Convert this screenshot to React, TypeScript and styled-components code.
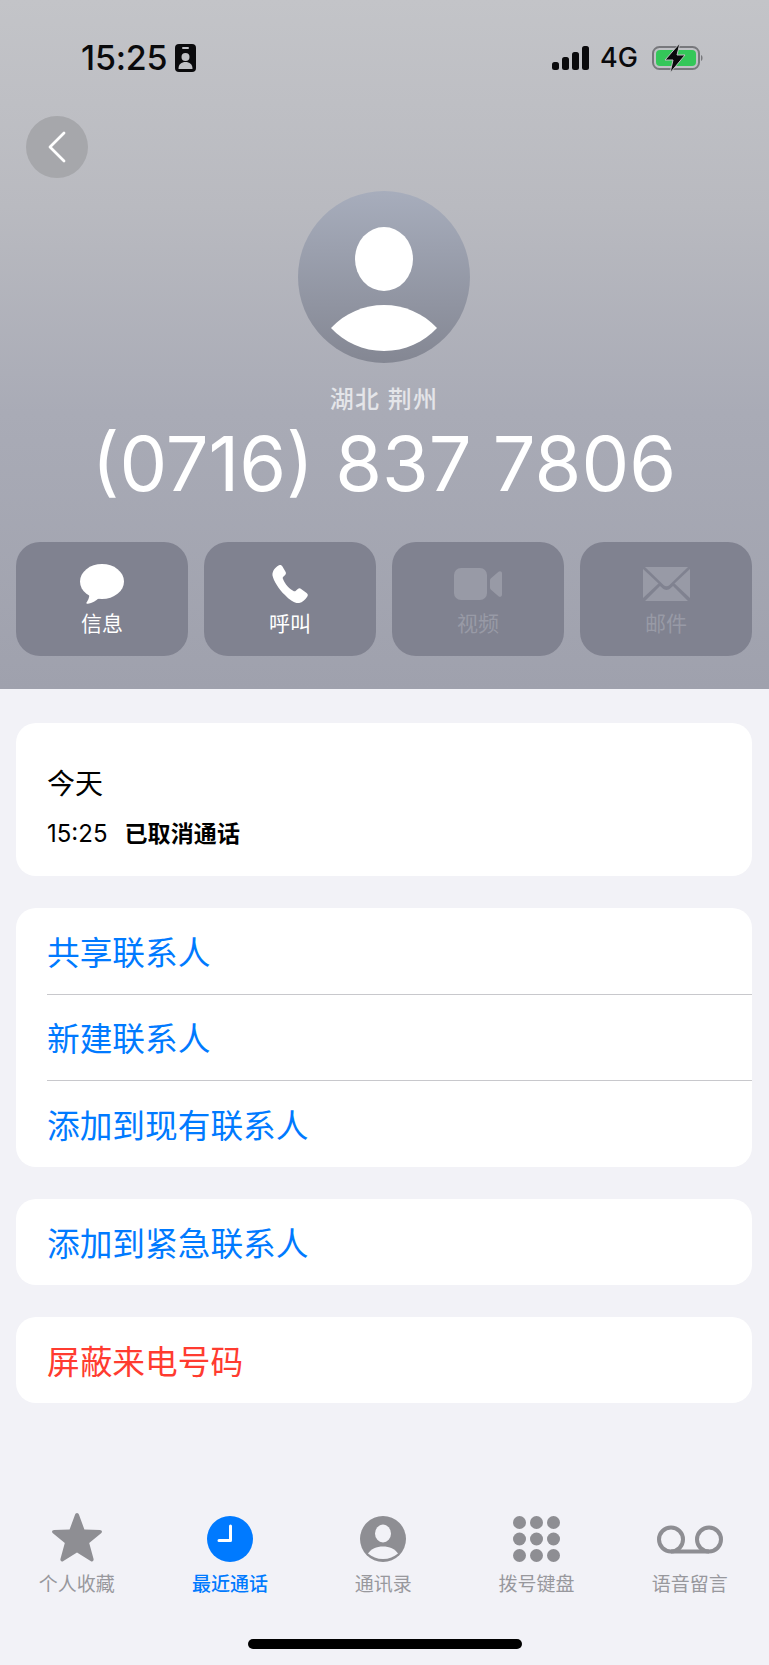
import React from "react";
import styled, { createGlobalStyle } from "styled-components";

const Global = createGlobalStyle`
  html, body { margin: 0; padding: 0; background: #f2f2f7; }
  * { box-sizing: border-box; }
`;
const CJK = `Inter, "Noto Sans CJK SC", sans-serif`;

const Page = styled.div`
  width: 769px; height: 1665px; display: flex; flex-direction: column;
  background: #f2f2f7; font-family: ${CJK}; overflow: hidden;
`;
const Header = styled.header`
  height: 689px; flex: none; padding: 41px 17px 33px 16px;
  background: linear-gradient(180deg, #c3c4c8 0%, #b9bac0 30%, #a9abb6 60%, #9fa1ad 100%);
  display: flex; flex-direction: column;
`;
const StatusBar = styled.div`
  height: 34px; display: flex; align-items: center; justify-content: space-between;
  padding: 0 48px 0 65px;
`;
const StatusGroup = styled.div<{ $gap: number }>`
  display: flex; align-items: center; gap: ${p => p.$gap}px;
`;
const Time = styled.span`
  font-family: Inter, sans-serif; font-size: 34px; font-weight: 500; color: #0a0a0c; letter-spacing: -0.2px; line-height: 34px;
`;
const Net = styled.span`
  font-family: Inter, sans-serif; font-size: 27px; font-weight: 500; color: #0a0a0c; line-height: 30px; margin: 0 2px 0 -2px;
`;
const BackButton = styled.div`
  width: 62px; height: 62px; border-radius: 50%; margin: 41px 0 0 10px; flex: none;
  background: #a6a7ab; display: flex; align-items: center; justify-content: center;
`;
const Avatar = styled.div`
  align-self: center; width: 172px; height: 172px; margin: 13px 0 0 0; flex: none;
`;
const Region = styled.div`
  text-align: center; font-size: 24px; font-weight: 500; line-height: 30px; margin-top: 22px; color: #e4e5e9; letter-spacing: 1.2px;
`;
const Phone = styled.div`
  text-align: center; font-family: Inter, sans-serif; font-weight: 400; font-size: 75.7px; line-height: 94px; color: #fff; margin-top: 2px;
`;
const Actions = styled.div`
  display: grid; grid-template-columns: repeat(4, 1fr); gap: 16px; margin-top: auto;
`;
const Action = styled.div<{ $off?: boolean }>`
  height: 114px; border-radius: 24px; background: #808290;
  display: flex; flex-direction: column; align-items: center;
  color: ${p => (p.$off ? "#989aa6" : "#fff")};
`;
const ActionIcon = styled.div`
  height: 42px; margin-top: 21px; display: flex; align-items: center; justify-content: center;
`;
const ActionLabel = styled.div`
  font-size: 21px; line-height: 26px; margin-top: 6px;
`;
const Body = styled.main`
  padding: 34px 17px 0 16px; display: flex; flex-direction: column; gap: 32px;
`;
const Card = styled.section`
  background: #fff; border-radius: 20px; overflow: hidden;
`;
const TodayCard = styled(Card)`
  height: 153px; padding: 43px 31px 0;
`;
const Today = styled.div`
  font-size: 28px; line-height: 36px; color: #000;
`;
const CallLine = styled.div`
  display: flex; align-items: baseline; gap: 17px; margin-top: 16px; line-height: 32px; color: #000;
`;
const CallTime = styled.span`
  font-family: Inter, sans-serif; font-size: 24px;
`;
const CallState = styled.span`
  font-size: 23px; font-weight: 700; letter-spacing: 0.1px;
`;
const Row = styled.div<{ $danger?: boolean; $line?: boolean; $tall?: boolean }>`
  height: ${p => (p.$tall ? 87 : 86)}px; margin-left: 31px; padding-bottom: 2px; display: flex; align-items: center;
  font-size: 32.7px; color: ${p => (p.$danger ? "#ff3b30" : "#007aff")};
  border-bottom: ${p => (p.$line ? "1px solid #c8c8cc" : "none")};
`;
const TabBar = styled.nav`
  margin-top: auto; height: 261px; padding: 108px 0 0; display: grid; grid-template-columns: repeat(5, 153.3px); position: relative;
`;
const Tab = styled.div<{ $active?: boolean }>`
  display: flex; flex-direction: column; align-items: center;
  color: ${p => (p.$active ? "#007aff" : "#98989d")}; font-weight: ${p => (p.$active ? 500 : 400)};
`;
const TabIcon = styled.div`
  height: 50px; display: flex; align-items: flex-end; justify-content: center;
`;
const TabLabel = styled.div`
  font-size: 19px; line-height: 24px; margin-top: 11px;
`;
const HomeBar = styled.div`
  position: absolute; left: 248px; bottom: 16px; width: 274px; height: 10px; border-radius: 5px; background: #000;
`;

const Signal = () => (
  <svg width="38" height="24" viewBox="0 0 38 24" fill="#0a0a0c">
    <rect x="0" y="16" width="7" height="8" rx="2.5" />
    <rect x="10" y="11" width="7" height="13" rx="2.5" />
    <rect x="20" y="6" width="7" height="18" rx="2.5" />
    <rect x="30" y="0" width="7" height="24" rx="2.5" />
  </svg>
);
const Badge = () => (
  <svg width="21" height="28" viewBox="0 0 21 28">
    <rect width="21" height="28" rx="4" fill="#0a0a0c" />
    <rect x="7" y="3" width="7" height="2" rx="1" fill="#c0c1c5" />
    <circle cx="10.5" cy="13" r="4" fill="#c0c1c5" />
    <path d="M3.5 25c0-5 3-7 7-7s7 2 7 7z" fill="#c0c1c5" />
  </svg>
);
const Battery = () => (
  <svg width="52" height="30" viewBox="0 0 52 30">
    <rect x="1" y="4" width="46" height="22" rx="6.5" fill="none" stroke="#77787c" strokeWidth="2" />
    <rect x="4" y="7" width="40" height="16" rx="4" fill="#34c759" />
    <path d="M49 12c2 .6 2 5.4 0 6z" fill="#77787c" />
    <path d="M28 0 13 17h8l-3 13 15-18h-8z" fill="#0a0a0c" stroke="#c0c1c5" strokeWidth="1" />
  </svg>
);
const Chevron = () => (
  <svg width="20" height="32" viewBox="0 0 20 32" fill="none">
    <path d="M17 2 3 16l14 14" stroke="#fff" strokeWidth="2.8" strokeLinecap="round" strokeLinejoin="round" />
  </svg>
);
const AvatarArt = () => (
  <svg width="172" height="172" viewBox="0 0 172 172">
    <defs>
      <linearGradient id="av" x1="0" y1="0" x2="0" y2="1">
        <stop offset="0" stopColor="#a7adbc" />
        <stop offset="1" stopColor="#848793" />
      </linearGradient>
    </defs>
    <circle cx="86" cy="86" r="86" fill="url(#av)" />
    <ellipse cx="86" cy="68" rx="29" ry="32" fill="#fff" />
    <path d="M33 137C47 122 66 114 86 114s39 8 53 23c-13 14-32 23-53 23s-40-9-53-23z" fill="#fff" />
  </svg>
);
const Bubble = () => (
  <svg width="44" height="40" viewBox="0 0 44 40" fill="currentColor">
    <ellipse cx="22" cy="17.5" rx="22" ry="17.5" />
    <path d="M9 28c1 4-.5 8-2.500 10.500C6 39.500 7 40 8 39.800c4-.6 8-3 11-5.800z" />
  </svg>
);
const Handset = () => (
  <svg width="37" height="38" viewBox="0 0 37 38" fill="currentColor">
    <path d="M6.500.5c1.500-1 3-.6 3.800.8l3.200 5.400c.8 1.400.5 2.600-.6 3.600l-1.600 1.500c-.6.600-.7 1.200-.4 2 1 2.800 2.700 5.400 4.800 7.800 2 2.200 4 3.800 6.200 4.600.8.300 1.300.1 1.900-.4l2-1.700c1-.9 2.200-1 3.300-.2l5.500 4c1.400 1 1.600 2.500.6 3.800-2.200 3-4.700 5.600-8 6.200-4 .7-9.500-2.800-14.500-8.200C7 24.700 1.500 15.500.5 10.500 0 6.500 3 2.500 6.500.5z" />
  </svg>
);
const Video = () => (
  <svg width="48" height="32" viewBox="0 0 48 32" fill="currentColor">
    <rect width="33" height="32" rx="7" />
    <path d="M36 12.500c0-1 .3-1.700 1-2.300l7.500-6.500C46 2.500 48 3.300 48 5.500v21c0 2.200-2 3-3.500 1.800L37 21.800c-.7-.6-1-1.300-1-2.300z" />
  </svg>
);
const Mail = () => (
  <svg width="47" height="34" viewBox="0 0 47 34" fill="currentColor">
    <path d="M2 0h43L26.500 18c-1.700 1.600-4.300 1.600-6 0z" />
    <path d="M0 2v29l15.500-14.500z" />
    <path d="M47 2v29L31.500 16.500z" />
    <path d="M2 34h43L30 19l-2.500 2.300c-2.300 2.100-5.700 2.100-8 0L17 19z" />
  </svg>
);
const Star = () => (
  <svg width="50" height="49" viewBox="0 0 50 49" fill="#8e8e93">
    <path d="M25 0c1 0 1.600.7 2 1.800l5.400 14.700 15.400.5c2.100.1 2.900 2 1.300 3.300L37.200 30l4.300 15.700c.6 2.200-1 3.500-2.900 2.200L25 39.400l-13.600 8.500c-1.900 1.300-3.500 0-2.900-2.200L12.800 30 .9 20.300c-1.600-1.300-.8-3.200 1.300-3.300l15.400-.5L23 1.800C23.400.7 24 0 25 0z" />
  </svg>
);
const Clock = () => (
  <svg width="46" height="46" viewBox="0 0 46 46">
    <circle cx="23" cy="23" r="23" fill="#007aff" />
    <path d="M23.500 10v14.500H12" fill="none" stroke="#fff" strokeWidth="3" strokeLinecap="round" strokeLinejoin="round" />
  </svg>
);
const Contact = () => (
  <svg width="46" height="46" viewBox="0 0 46 46">
    <circle cx="23" cy="23" r="23" fill="#8e8e93" />
    <ellipse cx="23" cy="17.500" rx="8" ry="9" fill="#f2f2f7" />
    <path d="M8 37.500c3-4.500 8.500-7 15-7s12 2.500 15 7c-4 3.500-9 5.500-15 5.500s-11-2-15-5.500z" fill="#f2f2f7" />
  </svg>
);
const Keypad = () => (
  <svg width="47" height="46" viewBox="0 0 47 46" fill="#8e8e93">
    {[6.500, 23, 39.500].flatMap(y => [6.500, 23.500, 40.500].map(x => <circle key={`${x}-${y}`} cx={x} cy={y} r="6.500" />))}
  </svg>
);
const Voicemail = () => (
  <svg width="66" height="46" viewBox="0 0 66 46" fill="none" stroke="#8e8e93" strokeWidth="4">
    <circle cx="14" cy="23.500" r="12" />
    <circle cx="52" cy="23.500" r="12" />
    <path d="M14 35.500h38" />
  </svg>
);

const App = () => (
  <Page>
    <Global />
    <Header>
      <StatusBar>
        <StatusGroup $gap={8}><Time>15:25</Time><Badge /></StatusGroup>
        <StatusGroup $gap={12}><Signal /><Net>4G</Net><Battery /></StatusGroup>
      </StatusBar>
      <BackButton><Chevron /></BackButton>
      <Avatar><AvatarArt /></Avatar>
      <Region>湖北 荆州</Region>
      <Phone>(0716) 837 7806</Phone>
      <Actions>
        <Action><ActionIcon><Bubble /></ActionIcon><ActionLabel>信息</ActionLabel></Action>
        <Action><ActionIcon><Handset /></ActionIcon><ActionLabel>呼叫</ActionLabel></Action>
        <Action $off><ActionIcon><Video /></ActionIcon><ActionLabel>视频</ActionLabel></Action>
        <Action $off><ActionIcon><Mail /></ActionIcon><ActionLabel>邮件</ActionLabel></Action>
      </Actions>
    </Header>
    <Body>
      <TodayCard>
        <Today>今天</Today>
        <CallLine><CallTime>15:25</CallTime><CallState>已取消通话</CallState></CallLine>
      </TodayCard>
      <Card>
        <Row $line $tall>共享联系人</Row>
        <Row $line>新建联系人</Row>
        <Row>添加到现有联系人</Row>
      </Card>
      <Card><Row>添加到紧急联系人</Row></Card>
      <Card><Row $danger>屏蔽来电号码</Row></Card>
    </Body>
    <TabBar>
      <Tab><TabIcon><Star /></TabIcon><TabLabel>个人收藏</TabLabel></Tab>
      <Tab $active><TabIcon><Clock /></TabIcon><TabLabel>最近通话</TabLabel></Tab>
      <Tab><TabIcon><Contact /></TabIcon><TabLabel>通讯录</TabLabel></Tab>
      <Tab><TabIcon><Keypad /></TabIcon><TabLabel>拨号键盘</TabLabel></Tab>
      <Tab><TabIcon><Voicemail /></TabIcon><TabLabel>语音留言</TabLabel></Tab>
      <HomeBar />
    </TabBar>
  </Page>
);

export default App;
